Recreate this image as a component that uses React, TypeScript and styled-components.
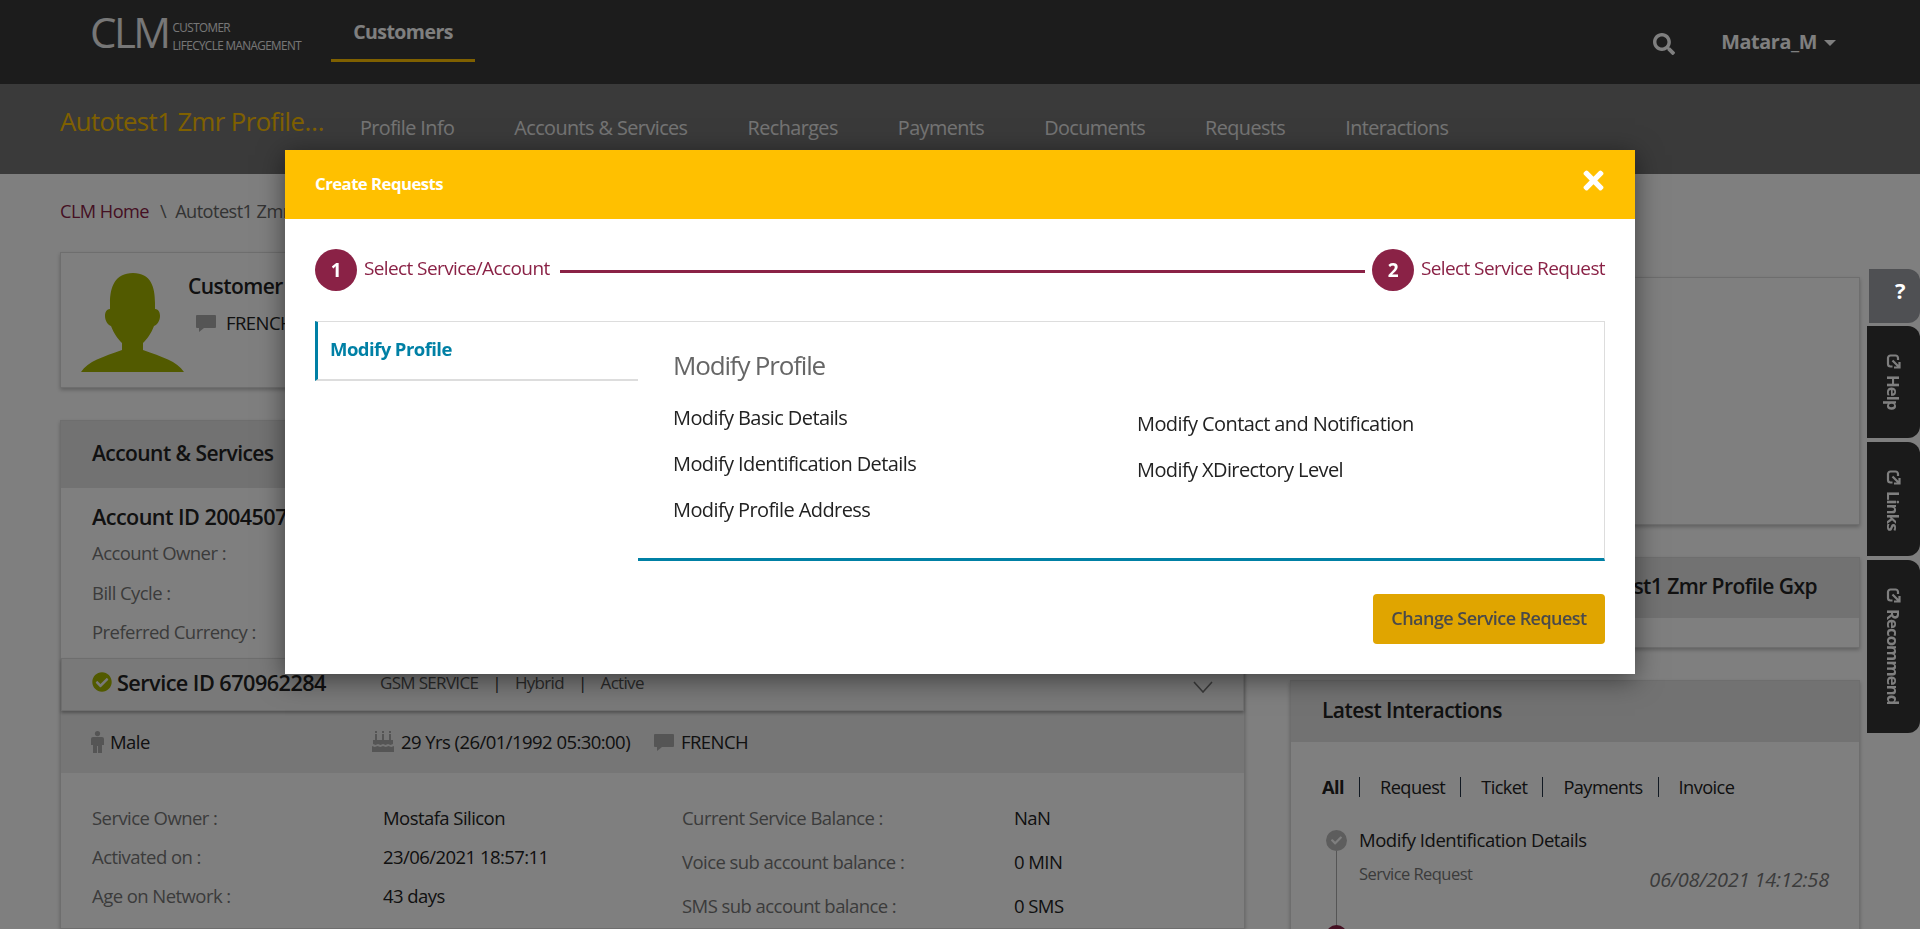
import React from "react";
import styled, { createGlobalStyle } from "styled-components";
import { FaCheck, FaCheckCircle, FaSearch, FaTimes } from "react-icons/fa";

const GlobalStyle = createGlobalStyle`
  html, body {
    margin: 0;
    height: 929px;
    overflow: hidden;
    background: #fff;
    color: #222;
    font-family: "Open Sans", "Noto Sans", sans-serif;
    font-size: 18.5px;
    letter-spacing: -0.03em;
  }
  * { box-sizing: border-box; }
`;

const TopBar = styled.header`
  height: 84px;
  background: #383838;
  display: flex;
  align-items: flex-start;
  padding: 0 84px 0 90px;
  color: #fff;
`;

const Logo = styled.div`
  display: flex;
  align-items: center;
  height: 72px;
  width: 241px;
  gap: 4px;
`;

const LogoMark = styled.span`
  font-size: 42px;
  line-height: 60px;
  margin-bottom: 8px;
  letter-spacing: -0.06em;
  color: #eee;
`;

const LogoText = styled.span`
  font-size: 11.7px;
  line-height: 18px;
  letter-spacing: -0.05em;
  color: #eee;
`;

const MainTab = styled.div`
  width: 144px;
  height: 62px;
  border-bottom: 3px solid #ffc000;
  text-align: center;
  padding-top: 18px;
  font-size: 19.5px;
  font-weight: 700;
`;

const UserArea = styled.div`
  margin-left: auto;
  height: 84px;
  display: flex;
  align-items: center;
  gap: 46px;
  font-weight: 700;
`;

const SearchIcon = styled(FaSearch)`
  margin-top: 3px;
`;

const User = styled.span`
  display: flex;
  align-items: center;
  gap: 7px;
  font-size: 19.8px;
  letter-spacing: -0.02em;
  margin-bottom: 2px;
`;

const Caret = styled.i`
  width: 0;
  height: 0;
  margin-top: 3px;
  border-left: 6px solid transparent;
  border-right: 6px solid transparent;
  border-top: 6px solid #fff;
`;

const SubNav = styled.nav`
  height: 90px;
  background: #747474;
  display: flex;
  align-items: flex-start;
  padding: 0 60px;
`;

const ProfileName = styled.div`
  width: 300px;
  padding-top: 20px;
  font-size: 25.7px;
  color: #ffc000;
  white-space: nowrap;
`;

const SubNavItem = styled.div`
  margin-right: 60px;
  padding-top: 30px;
  font-size: 19.8px;
  color: #e8e8e8;
  white-space: nowrap;
`;

const Main = styled.main`
  padding: 0 60px;
`;

const Breadcrumb = styled.div`
  height: 78px;
  padding-top: 25px;
  font-size: 18.2px;
  color: #666;
`;

const Crumb = styled.span`
  color: #8a2246;
`;

const CrumbSep = styled.span`
  margin: 0 9px 0 11px;
`;

const Columns = styled.div`
  display: grid;
  grid-template-columns: 1185px 570px;
  gap: 45px;
`;

const Col = styled.div<{ $top?: number }>`
  display: flex;
  flex-direction: column;
  gap: 32px;
  padding-top: ${(p) => p.$top || 0}px;
`;

const Card = styled.section<{ $height?: number }>`
  background: #fff;
  border: 1px solid #ddd;
  box-shadow: 0 2px 4px rgba(0, 0, 0, 0.25);
  height: ${(p) => (p.$height ? `${p.$height}px` : "auto")};
`;

const CustomerCard = styled(Card)`
  display: flex;
  padding: 20px 0 0 20px;
  gap: 3px;
`;

const CustomerInfo = styled.div`
  font-size: 21px;
  line-height: 26px;
  font-weight: 600;
`;

const LangLine = styled.div`
  display: flex;
  align-items: center;
  gap: 9px;
  margin: 11px 0 0 7px;
  font-size: 18.5px;
  font-weight: 400;
`;

const CardHead = styled.div<{ $height: number }>`
  height: ${(p) => p.$height}px;
  background: #e4e4e4;
  padding: 0 31px 4px;
  display: flex;
  align-items: center;
  font-size: 21px;
  font-weight: 600;
  color: #222;
`;

const ProfileHead = styled(CardHead)`
  justify-content: flex-end;
  padding-right: 42px;
  white-space: nowrap;
`;

const AccountTitle = styled.div`
  padding: 14px 31px 0;
  font-size: 21.6px;
  font-weight: 600;
  height: 46px;
`;

const Label = styled.div`
  color: #777;
  white-space: nowrap;
`;

const LabelRow = styled(Label)`
  padding-left: 31px;
  height: 39.5px;
  line-height: 38px;
`;

const ServiceRow = styled.div`
  height: 53px;
  display: flex;
  align-items: center;
  padding: 0 30px 4px 30px;
  background: #f2f2f2;
  border: 1px solid #ddd;
  box-shadow: 0 2px 3px rgba(0, 0, 0, 0.3);
  position: relative;
  margin-top: 5px;
`;

const ServiceId = styled.div`
  display: flex;
  align-items: center;
  gap: 5px;
  width: 288px;
  font-size: 21.7px;
  font-weight: 600;
`;

const ServiceMeta = styled.div`
  font-size: 17px;
  letter-spacing: -0.04em;
  color: #555;
  display: flex;
  gap: 14px;
`;

const Pipe = styled.span`
  color: #333;
`;

const Chevron = styled.svg`
  margin-left: auto;
  margin-top: 10px;
`;

const FactsRow = styled.div`
  height: 62px;
  background: #ececec;
  display: flex;
  align-items: center;
  padding-left: 30px;
`;

const Fact = styled.span<{ $width?: number }>`
  display: flex;
  align-items: center;
  gap: 6px;
  width: ${(p) => (p.$width ? `${p.$width}px` : "auto")};
  white-space: nowrap;
`;

const CakeIcon = styled.svg`
  margin-right: 1px;
`;

const Details = styled.div`
  display: grid;
  grid-template-columns: 590px 1fr;
  padding: 25px 0 0 31px;
`;

const DetailList = styled.div<{ $rowHeight: number; $offset: number; $drop?: number }>`
  display: grid;
  grid-template-columns: ${(p) => p.$offset}px 1fr;
  grid-auto-rows: ${(p) => p.$rowHeight}px;
  margin-top: ${(p) => p.$drop || 0}px;
  align-items: center;
`;

const TabLine = styled.div`
  display: flex;
  align-items: center;
  padding: 28px 0 0 31px;
  font-size: 18.2px;
  height: 61px;
`;

const TabSep = styled.i`
  width: 1px;
  height: 20px;
  background: #234;
  margin: 0 20px 0 15px;
`;

const AllTab = styled.b`
  font-weight: 700;
`;

const Timeline = styled.div`
  display: grid;
  grid-template-columns: 21px 1fr auto;
  column-gap: 12px;
  padding: 24px 30px 0 35px;
  height: 200px;
`;

const Dot = styled.div`
  width: 21px;
  height: 21px;
  flex: none;
  border-radius: 50%;
  background: #bbb;
  color: #fff;
  display: flex;
  align-items: center;
  justify-content: center;
  font-size: 11px;
  margin-top: 3px;
`;

const DotTrack = styled.div`
  display: flex;
  flex-direction: column;
  align-items: center;
`;

const DotLine = styled.i`
  width: 1px;
  height: 74px;
  flex: none;
  background: #aaa;
`;

const RedDot = styled.i`
  width: 21px;
  height: 21px;
  flex: none;
  border-radius: 50%;
  background: #8a2246;
`;

const EventTitle = styled.div`
  line-height: 26px;
  letter-spacing: -0.025em;
`;

const EventType = styled.div`
  font-size: 16.5px;
  color: #777;
  margin-top: 9px;
`;

const EventDate = styled.div`
  font-size: 20px;
  font-style: italic;
  letter-spacing: -0.01em;
  color: #777;
  padding-top: 39px;
`;

const Backdrop = styled.div`
  position: fixed;
  inset: 0;
  z-index: 1;
  background: rgba(0, 0, 0, 0.5);
`;

const SideTabs = styled.aside`
  position: fixed;
  top: 326px;
  right: 0;
  width: 53px;
  display: flex;
  flex-direction: column;
  gap: 4px;
`;

const HelpTab = styled.div`
  position: fixed;
  top: 269px;
  right: 0;
  z-index: 2;
  width: 51px;
  height: 54px;
  background: #4f5053;
  border-radius: 0 12px 12px 0;
  color: #fff;
  font-weight: 700;
  font-size: 22px;
  display: flex;
  align-items: center;
  justify-content: center;
  padding: 0 0 12px 11px;
`;

const SideTab = styled.div<{ $height: number }>`
  width: 53px;
  height: ${(p) => p.$height}px;
  background: #353535;
  border-radius: 0 12px 12px 0;
  writing-mode: vertical-rl;
  color: #fff;
  font-weight: 700;
  font-size: 16.5px;
  letter-spacing: -0.05em;
  display: flex;
  align-items: center;
  gap: 6px;
  padding-top: 28px;
`;

const Modal = styled.div`
  position: fixed;
  top: 150px;
  left: 285px;
  z-index: 2;
  width: 1350px;
  height: 524px;
  background: #fff;
  box-shadow: 0 5px 25px rgba(0, 0, 0, 0.5);
`;

const ModalHead = styled.div`
  height: 69px;
  background: #ffc000;
  color: #fff;
  padding: 0 30px;
  display: flex;
  align-items: center;
  justify-content: space-between;
  font-size: 16.8px;
  font-weight: 700;
`;

const ModalTitle = styled.span`
  margin-bottom: 2px;
`;

const CloseButton = styled.button`
  border: 0;
  padding: 0;
  background: none;
  color: #fff;
  display: flex;
  margin: 0 -3px 8px 0;
`;

const ModalBody = styled.div`
  padding: 30px 30px 0;
`;

const Stepper = styled.div`
  display: flex;
  align-items: center;
  height: 42px;
`;

const StepBadge = styled.span`
  width: 42px;
  height: 42px;
  flex: none;
  border-radius: 50%;
  background: #8a2246;
  color: #fff;
  font-size: 19px;
  font-weight: 700;
  display: flex;
  align-items: center;
  justify-content: center;
`;

const StepLabel = styled.span`
  margin-left: 7px;
  padding-bottom: 4px;
  color: #8a2246;
  font-size: 19px;
  letter-spacing: -0.032em;
  white-space: nowrap;
`;

const StepLine = styled.i`
  flex: 1;
  height: 3px;
  margin: 3px 7px 0 10px;
  background: #8a2246;
`;

const Picker = styled.div`
  display: flex;
  margin-top: 30px;
`;

const GroupList = styled.div`
  width: 323px;
  flex: none;
`;

const Group = styled.div`
  height: 60px;
  border-left: 3px solid #0080a5;
  border-top: 1px solid #ddd;
  border-bottom: 2px solid #ddd;
  padding: 14px 0 0 12px;
  color: #0080a5;
  font-weight: 700;
`;

const RequestPanel = styled.div`
  flex: 1;
  height: 240px;
  border: 1px solid #ddd;
  border-left: 0;
  border-bottom: 3px solid #0080a5;
  padding: 25px 0 0 35px;
`;

const PanelTitle = styled.h3`
  margin: 0;
  height: 57px;
  color: #666;
  font-size: 26px;
  font-weight: 400;
  letter-spacing: -0.045em;
`;

const RequestColumns = styled.div`
  display: grid;
  grid-template-columns: 464px 1fr;
`;

const RequestList = styled.div<{ $drop?: boolean }>`
  display: flex;
  flex-direction: column;
  gap: 20px;
  margin-top: ${(p) => (p.$drop ? 7 : 1)}px;
`;

const RequestLink = styled.div`
  color: #222;
  font-size: 20px;
  letter-spacing: -0.03em;
  line-height: 26px;
  height: 26px;
`;

const Footer = styled.div`
  display: flex;
  justify-content: flex-end;
  margin-top: 33px;
`;

const ChangeButton = styled.button`
  width: 232px;
  height: 50px;
  border: 0;
  border-radius: 4px;
  background: #e0a500;
  color: #4a4a4a;
  font-family: inherit;
  font-size: 18px;
  font-weight: 600;
  letter-spacing: -0.03em;
  padding-bottom: 3px;
`;

const Bubble = () => (
  <svg width="22" height="22" viewBox="0 0 22 22" fill="#aaa">
    <path d="M2 3h18a1 1 0 0 1 1 1v11a1 1 0 0 1-1 1H9l-5 4v-4H2a1 1 0 0 1-1-1V4a1 1 0 0 1 1-1z" />
  </svg>
);

const Avatar = () => (
  <svg width="104" height="100" viewBox="0 0 104 100" fill="#a4b400">
    <path d="M52 0C34 0 29 14 29 30v6c-4 0-5 4-5 7 0 5 3 9 6 10 3 8 7 13 11 17v7C22 84 7 88 0 99h103C96 88 81 84 62 77v-7c4-4 8-9 11-17 3-1 6-5 6-10 0-3-1-7-5-7v-6C74 14 70 0 52 0z" />
  </svg>
);

const Person = () => (
  <svg width="13" height="22" viewBox="0 0 13 22" fill="#aaa">
    <circle cx="6.5" cy="2.6" r="2.6" />
    <path d="M2 6h9a2 2 0 0 1 2 2v6h-2v8H7v-7H6v7H2v-8H0V8a2 2 0 0 1 2-2z" />
  </svg>
);

const Cake = () => (
  <CakeIcon width="22" height="21" viewBox="0 0 22 21" fill="#aaa">
    <path d="M3 0h2v2H3zM10 0h2v2h-2zM17 0h2v2h-2zM3 3h2v6H3zM10 3h2v6h-2zM17 3h2v6h-2z" />
    <path d="M1 9h20v4l-2.500 1-2.500-1-2.500 1-2.500-1-2.500 1-2.500-1-2.500 1L1 13zM0 15l2.750 1 2.750-1 2.750 1L11 15l2.750 1 2.750-1 2.750 1L22 15v6H0z" />
  </CakeIcon>
);

// the share icon sits turned with the tab text, arrow to the lower right
const ShareIcon = () => (
  <svg width="15" height="15" viewBox="0 0 15 15" fill="none" stroke="currentColor" strokeWidth="2.2">
    <path d="M12 6V4a2.5 2.5 0 0 0-2.5-2.5h-5A2.5 2.5 0 0 0 2 4v6a2.5 2.5 0 0 0 2.500 2.500h2" />
    <path d="M6.500 6.500l6.500 6.500M13.500 8v5.500H8" />
  </svg>
);

const DETAILS_LEFT = [
  ["Service Owner :", "Mostafa Silicon"],
  ["Activated on :", "23/06/2021 18:57:11"],
  ["Age on Network :", "43 days"],
];

const DETAILS_RIGHT = [
  ["Current Service Balance :", "NaN"],
  ["Voice sub account balance :", "0 MIN"],
  ["SMS sub account balance :", "0 SMS"],
];

const NAV_ITEMS = ["Profile Info", "Accounts & Services", "Recharges", "Payments", "Documents", "Requests", "Interactions"];

export default function App() {
  return (
    <>
      <GlobalStyle />
      <TopBar>
        <Logo>
          <LogoMark>CLM</LogoMark>
          <LogoText>
            CUSTOMER
            <br />
            LIFECYCLE MANAGEMENT
          </LogoText>
        </Logo>
        <MainTab>Customers</MainTab>
        <UserArea>
          <SearchIcon size={22} />
          <User>
            Matara_M <Caret />
          </User>
        </UserArea>
      </TopBar>
      <SubNav>
        <ProfileName>Autotest1 Zmr Profile…</ProfileName>
        {NAV_ITEMS.map((item) => (
          <SubNavItem key={item}>{item}</SubNavItem>
        ))}
      </SubNav>
      <Main>
        <Breadcrumb>
          <Crumb>CLM Home</Crumb>
          <CrumbSep>\</CrumbSep>Autotest1 Zmr Profile Gxp
        </Breadcrumb>
        <Columns>
          <Col>
            <CustomerCard $height={136}>
              <Avatar />
              <CustomerInfo>
                Customer
                <LangLine>
                  <Bubble />
                  FRENCH
                </LangLine>
              </CustomerInfo>
            </CustomerCard>
            <Card>
              <CardHead $height={67}>Account &amp; Services</CardHead>
              <AccountTitle>Account ID 20045071</AccountTitle>
              <LabelRow>Account Owner :</LabelRow>
              <LabelRow>Bill Cycle :</LabelRow>
              <LabelRow>Preferred Currency :</LabelRow>
              <ServiceRow>
                <ServiceId>
                  <FaCheckCircle size={20} color="#a4b400" />
                  Service ID 670962284
                </ServiceId>
                <ServiceMeta>
                  GSM SERVICE <Pipe>|</Pipe> Hybrid <Pipe>|</Pipe> Active
                </ServiceMeta>
                <Chevron width="20" height="12" viewBox="0 0 20 12" fill="none" stroke="#777" strokeWidth="1.6">
                  <path d="M1 1l9 10 9-10" />
                </Chevron>
              </ServiceRow>
              <FactsRow>
                <Fact $width={281}>
                  <Person />
                  Male
                </Fact>
                <Fact $width={281}>
                  <Cake />
                  29 Yrs (26/01/1992 05:30:00)
                </Fact>
                <Fact>
                  <Bubble />
                  FRENCH
                </Fact>
              </FactsRow>
              <Details>
                <DetailList $rowHeight={39} $offset={291}>
                  {DETAILS_LEFT.map(([label, value]) => (
                    <React.Fragment key={label}>
                      <Label>{label}</Label>
                      <div>{value}</div>
                    </React.Fragment>
                  ))}
                </DetailList>
                <DetailList $rowHeight={44} $offset={332} $drop={-2}>
                  {DETAILS_RIGHT.map(([label, value]) => (
                    <React.Fragment key={label}>
                      <Label>{label}</Label>
                      <div>{value}</div>
                    </React.Fragment>
                  ))}
                </DetailList>
              </Details>
            </Card>
          </Col>
          <Col $top={25}>
            <Card $height={248} />
            <Card $height={91}>
              <ProfileHead $height={60}>Autotest1 Zmr Profile Gxp</ProfileHead>
            </Card>
            <Card>
              <CardHead $height={61}>Latest Interactions</CardHead>
              <TabLine>
                <AllTab>All</AllTab>
                <TabSep />
                Request
                <TabSep />
                Ticket
                <TabSep />
                Payments
                <TabSep />
                Invoice
              </TabLine>
              <Timeline>
                <DotTrack>
                  <Dot>
                    <FaCheck />
                  </Dot>
                  <DotLine />
                  <RedDot />
                </DotTrack>
                <div>
                  <EventTitle>Modify Identification Details</EventTitle>
                  <EventType>Service Request</EventType>
                </div>
                <EventDate>06/08/2021 14:12:58</EventDate>
              </Timeline>
            </Card>
          </Col>
        </Columns>
      </Main>
      <SideTabs>
        <SideTab $height={112}>
          <ShareIcon />
          Help
        </SideTab>
        <SideTab $height={114}>
          <ShareIcon />
          Links
        </SideTab>
        <SideTab $height={173}>
          <ShareIcon />
          Recommend
        </SideTab>
      </SideTabs>
      <Backdrop />
      <HelpTab>?</HelpTab>
      <Modal>
        <ModalHead>
          <ModalTitle>Create Requests</ModalTitle>
          <CloseButton aria-label="Close">
            <FaTimes size={29} />
          </CloseButton>
        </ModalHead>
        <ModalBody>
          <Stepper>
            <StepBadge>1</StepBadge>
            <StepLabel>Select Service/Account</StepLabel>
            <StepLine />
            <StepBadge>2</StepBadge>
            <StepLabel>Select Service Request</StepLabel>
          </Stepper>
          <Picker>
            <GroupList>
              <Group>Modify Profile</Group>
            </GroupList>
            <RequestPanel>
              <PanelTitle>Modify Profile</PanelTitle>
              <RequestColumns>
                <RequestList>
                  <RequestLink>Modify Basic Details</RequestLink>
                  <RequestLink>Modify Identification Details</RequestLink>
                  <RequestLink>Modify Profile Address</RequestLink>
                </RequestList>
                <RequestList $drop>
                  <RequestLink>Modify Contact and Notification</RequestLink>
                  <RequestLink>Modify XDirectory Level</RequestLink>
                </RequestList>
              </RequestColumns>
            </RequestPanel>
          </Picker>
          <Footer>
            <ChangeButton>Change Service Request</ChangeButton>
          </Footer>
        </ModalBody>
      </Modal>
    </>
  );
}
